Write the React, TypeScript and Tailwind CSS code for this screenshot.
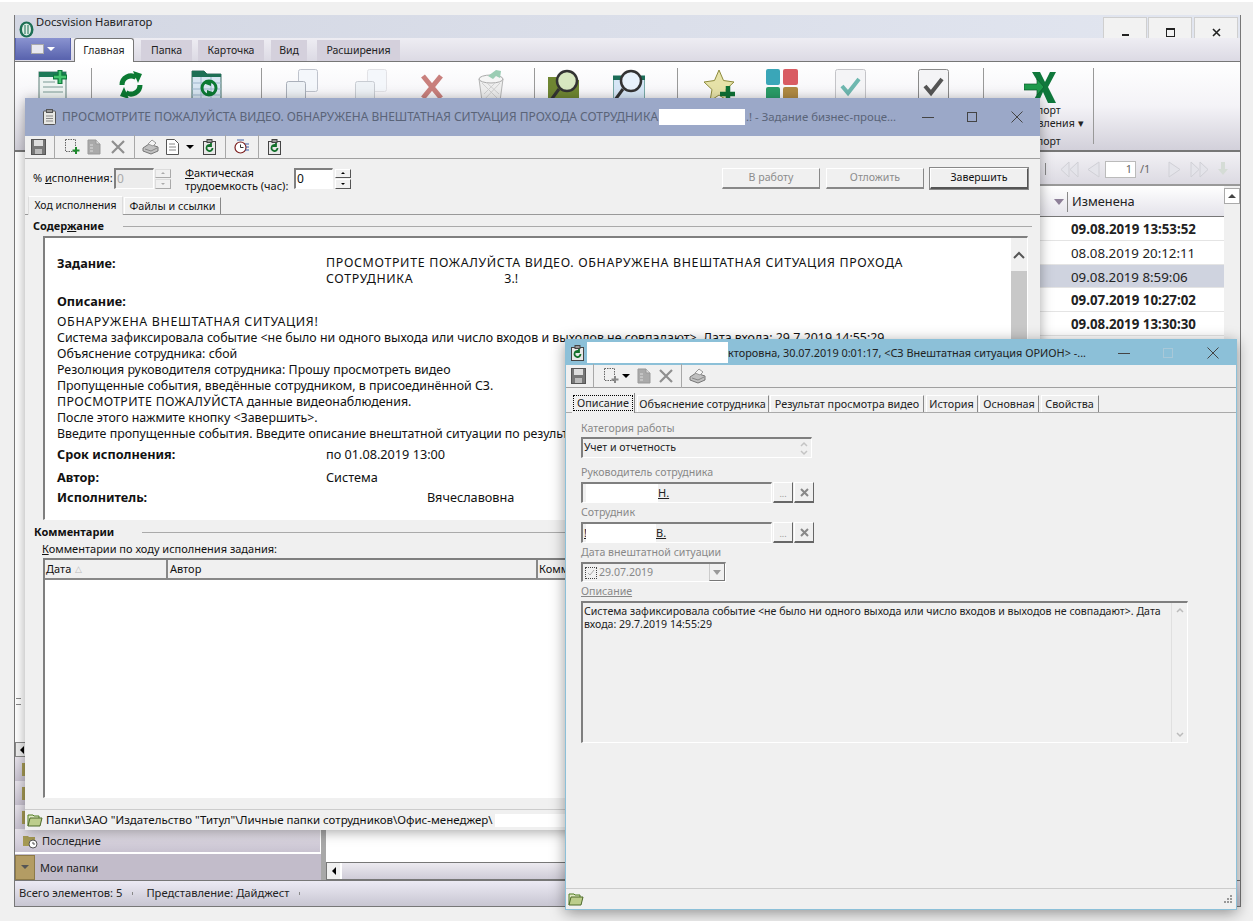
import type { ReactNode } from "react";

const Sep = ({ ml }: { ml: string }) => <div className={`w-px h-[24px] bg-[#a8a8a8] ${ml}`} />;

const Save = () => (
  <svg width="15" height="16" viewBox="0 0 15 16" className="shrink-0">
    <rect x="0.5" y="0.5" width="14" height="15" fill="#777" stroke="#555" />
    <rect x="3" y="1" width="9" height="6" fill="#ddd" />
    <rect x="4" y="10" width="7" height="5" fill="#bbb" />
  </svg>
);
const NewDoc = ({ grey }: { grey?: boolean }) => (
  <svg width="16" height="18" viewBox="0 0 16 18" className="shrink-0">
    <rect x="1.5" y="1.5" width="10" height="12" fill="none" stroke="#666" strokeDasharray="1.5 1" />
    <path d="M12 9v7M8.500 12.500h7" stroke={grey ? "#888" : "#1d8a2c"} strokeWidth="2" />
  </svg>
);
const Pages = () => (
  <svg width="14" height="16" viewBox="0 0 14 16" className="shrink-0">
    <path d="M1 1h8l4 4v10H1z" fill="#aaa" stroke="#999" />
    <path d="M9 1v4h4" fill="#ddd" stroke="#999" />
    <path d="M3 6h3M3 9h3M3 12h3" stroke="#ddd" />
  </svg>
);
const Cross = () => (
  <svg width="16" height="16" viewBox="0 0 16 16" className="shrink-0">
    <path d="M2 2l12 12M14 2L2 14" stroke="#8f8f8f" strokeWidth="2.200" />
  </svg>
);
const Printer = () => (
  <svg width="17" height="16" viewBox="0 0 17 16" className="shrink-0">
    <path d="M1 9l6-4 9 3v4l-7 3-8-3z" fill="#c0c0c0" stroke="#777" />
    <path d="M6 5l4-4 4 3-3 3z" fill="#f4f4f4" stroke="#999" />
    <path d="M3 10l6 2 6-3" fill="none" stroke="#888" />
  </svg>
);
const Sheet = () => (
  <svg width="13" height="16" viewBox="0 0 13 16" className="shrink-0">
    <path d="M0.500 0.500h8l4 4v11h-12z" fill="#fff" stroke="#555" />
    <path d="M3 5h6M3 8h7M3 11h7" stroke="#888" />
  </svg>
);
const Caret = () => <div className="w-0 h-0 border-x-[4px] border-x-transparent border-t-[4px] border-t-black" />;
const Revert = () => (
  <svg width="13" height="16" viewBox="0 0 13 16" className="shrink-0">
    <rect x="0.500" y="2.500" width="12" height="13" fill="#e8e8e8" stroke="#444" />
    <rect x="4" y="0.500" width="5" height="3" fill="#999" stroke="#444" />
    <path d="M9.500 9a3 3 0 1 1-2-2.800M8 4v3H5" fill="none" stroke="#12702a" strokeWidth="1.800" />
  </svg>
);
const Clock = () => (
  <svg width="16" height="16" viewBox="0 0 16 16" className="shrink-0">
    <circle cx="6.500" cy="8.500" r="5.500" fill="#fff" stroke="#7c1e1e" strokeWidth="1.200" />
    <path d="M6.500 5.500v3h3" fill="none" stroke="#333" />
    <path d="M3 1h7M11 5h4M12 8h3M11 11h4" stroke="#3b5fa8" />
  </svg>
);
const Folder = () => (
  <svg width="16" height="14" viewBox="0 0 16 14" className="shrink-0">
    <path d="M1 13V2h5l1 1h5v2" fill="#dfe8c4" stroke="#4e7a1e" />
    <path d="M1 13l2-8h12l-2 8z" fill="#bccd8c" stroke="#4e6a2a" />
  </svg>
);

const DocPlus = () => (
  <svg width="32" height="32" viewBox="0 0 32 32">
    <rect x="1" y="3" width="27" height="28" fill="#eef4f2" stroke="#5f7f78" />
    <rect x="1" y="3" width="27" height="5" fill="#1e7a58" />
    <path d="M5 13h12M5 18h20M5 23h20" stroke="#7b9a94" />
    <path d="M22 1v14M15 8h14" stroke="#0f7b3c" strokeWidth="5" />
    <path d="M22 2v12M16 8h12" stroke="#46c46f" strokeWidth="2.500" />
  </svg>
);
const Refresh = () => (
  <svg width="32" height="32" viewBox="0 0 32 32">
    <path d="M7 16a9 9 0 0 1 14-7.500" fill="none" stroke="#0c7a33" strokeWidth="5" />
    <path d="M25 16a9 9 0 0 1-14 7.500" fill="none" stroke="#0c7a33" strokeWidth="5" />
    <path d="M18 2l9 3-4 9zM14 30l-9-3 4-9z" fill="#0c7a33" />
  </svg>
);
const FolderGrid = () => (
  <svg width="32" height="32" viewBox="0 0 32 32">
    <path d="M1 31V2h12l3 3h14v26z" fill="#d8e6f2" stroke="#3f6d64" />
    <path d="M1 2h12l3 3h14v3H1z" fill="#1e6f55" />
    <path d="M1 14h29M1 20h29M1 26h29M10 8v23M20 8v23" stroke="#9db6cc" />
    <circle cx="18" cy="19" r="7" fill="none" stroke="#0c7a33" strokeWidth="3" />
    <path d="M12 14l8-3v6zM24 24l-8 3v-6z" fill="#0c7a33" />
  </svg>
);
const CopyBoxes = ({ faded }: { faded?: boolean }) => (
  <svg width="32" height="34" viewBox="0 0 32 34">
    <rect x="12.500" y="0.500" width="19" height="22" rx="2" fill="#f4f7fb" stroke={faded ? "#e2e2e6" : "#bfc3cc"} />
    <rect x="0.500" y="12.500" width="19" height="21" rx="2" fill="#eef2f6" stroke={faded ? "#c8ccd2" : "#aab0ba"} />
  </svg>
);
const RedX = () => (
  <svg width="32" height="32" viewBox="0 0 32 32">
    <path d="M7 5l18 22M25 5L7 27" stroke="#c9807d" strokeWidth="5" />
  </svg>
);
const Bin = () => (
  <svg width="32" height="34" viewBox="0 0 32 34">
    <path d="M4 10l3 22h18l3-22z" fill="#eeeeee" stroke="#b5b5b5" />
    <ellipse cx="16" cy="10" rx="12" ry="4" fill="#f5f5f5" stroke="#aaa" />
    <path d="M7 14l17 17M25 14L9 31M12 14l12 11M20 14L9 25" stroke="#cfcfcf" />
    <path d="M13 7l8-6 5 1-1 7-4-2-3 3z" fill="#9bcdb4" />
  </svg>
);
const FolderMag = () => (
  <svg width="32" height="34" viewBox="0 0 32 34">
    <path d="M0 8h12l2 3h17v23H0z" fill="#6f8632" />
    <circle cx="19" cy="12" r="10" fill="#d7e7c0" stroke="#333" strokeWidth="2.500" />
    <path d="M11 20L3 31" stroke="#333" strokeWidth="3" />
  </svg>
);
const SheetMag = () => (
  <svg width="32" height="34" viewBox="0 0 32 34">
    <rect x="0" y="7" width="32" height="27" fill="#d6e6f6" stroke="#1c6d58" />
    <rect x="0" y="7" width="32" height="4" fill="#1c6d58" />
    <circle cx="18" cy="12" r="10" fill="#e8f2fb" stroke="#333" strokeWidth="2.500" />
    <path d="M10 20L2 31" stroke="#333" strokeWidth="3" />
  </svg>
);
const StarPlus = () => (
  <svg width="32" height="34" viewBox="0 0 32 34">
    <path d="M16 1l4.500 10.500L31 13l-8 7.500L25 32l-9-6-9 6 2-11.500L1 13l10.500-1.500z" fill="#e6e2a8" stroke="#8d8a3c" />
    <path d="M25 17v16M17 25h15" stroke="#0d7034" strokeWidth="4.500" />
  </svg>
);
const Tiles = () => (
  <svg width="32" height="34" viewBox="0 0 32 34">
    <rect x="0" y="0" width="14" height="16" rx="2" fill="#3aa6b8" />
    <rect x="17" y="0" width="15" height="16" rx="2" fill="#d95b62" />
    <rect x="0" y="18" width="14" height="16" rx="2" fill="#2a9d68" />
    <rect x="17" y="18" width="15" height="16" rx="2" fill="#b08a43" />
  </svg>
);
const CheckBox = ({ color, edge }: { color: string; edge: string }) => (
  <svg width="32" height="34" viewBox="0 0 32 34">
    <rect x="0.500" y="0.500" width="30" height="33" rx="2" fill="#f4f4f6" stroke={edge} />
    <path d="M7 17l6 7 11-14" fill="none" stroke={color} strokeWidth="4" />
  </svg>
);
const Excel = () => (
  <svg width="32" height="32" viewBox="0 0 32 32">
    <path d="M8 1h8l5 10 5-10h6l-8 15 8 16h-8l-5-11-5 11H8l9-16z" fill="#10783c" />
    <path d="M0 13h13V8l7 8-7 8v-5H0z" fill="#1f9a4c" stroke="#0d5a2c" strokeWidth="0.700" />
  </svg>
);

// faded pager arrows of the grid toolbar
const PagerArrow = ({ d, ml }: { d: string; ml: string }) => (
  <svg width="20" height="17" viewBox="0 0 20 17" className={`shrink-0 ${ml}`}>
    <path d={d} fill="#e4e4ea" stroke="#d0d0d6" />
  </svg>
);

const Inset = ({ className, children }: { className: string; children?: ReactNode }) => (
  <div className={`border-t-2 border-l-2 border-t-[#7f7f7f] border-l-[#7f7f7f] border-r border-b border-r-white border-b-white ${className}`}>
    {children}
  </div>
);

const Spin = ({ faded, ml }: { faded?: boolean; ml: string }) => (
  <div className={`flex flex-col w-[16px] h-[20px] gap-px ${ml}`}>
    {[0, 1].map((i) => (
      <div
        key={i}
        className={`flex-1 flex items-center justify-center border ${
          faded ? "border-[#dcdcdc] border-b-[#aaa] border-r-[#aaa]" : "border-white border-b-[#555] border-r-[#555] bg-[#f0f0f0]"
        }`}
      >
        <div
          className={
            i === 0
              ? `w-0 h-0 border-x-[2px] border-x-transparent border-b-[2px] ${faded ? "border-b-[#aaa]" : "border-b-black"}`
              : `w-0 h-0 border-x-[2px] border-x-transparent border-t-[2px] ${faded ? "border-t-[#aaa]" : "border-t-black"}`
          }
        />
      </div>
    ))}
  </div>
);

const ActionBtn = ({ label, on, ml }: { label: string; on?: boolean; ml?: string }) => (
  <div
    className={`w-[98px] h-[21px] flex items-center justify-center text-[10.6px] border border-t-white border-l-white ${ml ?? ""} ${
      on ? "border-r-[#555] border-b-[#555] border-b-2 outline outline-[#888] text-[#111]" : "border-r-[#888] border-b-[#888] border-b-2 text-[#8c8c8c]"
    }`}
  >
    {label}
  </div>
);

const WinControls = ({ max }: { max: string }) => (
  <>
    <div className="w-[12px] h-px bg-[#444]" />
    <div className={`w-[10px] h-[10px] border ml-[33px] ${max}`} />
    <svg width="12" height="12" viewBox="0 0 12 12" className="ml-[34px]">
      <path d="M0.500 0.500l11 11M11.500 0.500l-11 11" stroke="#444" />
    </svg>
  </>
);

const rows = [
  { t: "09.08.2019 13:53:52", bold: true },
  { t: "08.08.2019 20:12:11" },
  { t: "09.08.2019 8:59:06", sel: true },
  { t: "09.07.2019 10:27:02", bold: true },
  { t: "09.08.2019 13:30:30", bold: true },
  { t: "" },
];

const MainWindow = () => (
  <div className="flex flex-col h-full border-x border-b border-[#777] bg-white font-['Noto_Sans',sans-serif] text-[#222]">
    <div className="h-[23px] flex items-center pl-[4px] bg-gradient-to-r from-[#d3d7e3] to-[#e2e6f0] relative shrink-0">
      <svg width="15" height="17" viewBox="0 0 15 17" className="mt-[5px]">
        <ellipse cx="7.500" cy="8.500" rx="7" ry="8" fill="#1d6f54" />
        <ellipse cx="7.500" cy="8.500" rx="4.500" ry="6" fill="#dfeee6" />
        <path d="M6 4v9M9 4v9" stroke="#1d6f54" />
      </svg>
      <span className="ml-[2px] text-[11.2px] mb-[9px]">Docsvision Навигатор</span>
      <div className="flex ml-auto mr-[2px] h-[23px] items-end">
        <div className="w-[44px] h-[21px] bg-[#f2f2f2] border-x border-t border-[#cfcfcf] flex items-end justify-center pb-[2px]">
          <div className="w-[7px] h-[2px] bg-[#222]" />
        </div>
        <div className="w-[44px] h-[21px] ml-[1px] bg-[#f2f2f2] border-x border-t border-[#cfcfcf] flex items-end justify-center pb-[1px]">
          <div className="w-[9px] h-[9px] border border-t-2 border-[#222]" />
        </div>
        <div className="w-[44px] h-[21px] ml-[2px] bg-[#f2f2f2] border-x border-t border-[#cfcfcf] flex items-end justify-center pb-[1px]">
          <svg width="9" height="9" viewBox="0 0 9 9"><path d="M1 1l7 7M8 1L1 8" stroke="#222" strokeWidth="1.600" /></svg>
        </div>
      </div>
    </div>
    <div className="h-[24px] flex items-end bg-gradient-to-b from-[#eeedf3] to-[#dcdae4] border-b border-[#777] shrink-0 text-[10.5px]">
      <div className="w-[56px] h-[23px] mb-[1px] bg-gradient-to-b from-[#8a93d0] to-[#5a64ae] border border-[#5a64b0] flex items-center justify-center gap-[3px]">
        <div className="w-[13px] h-[10px] bg-[#e8e8f0] border border-[#aaa]" />
        <div className="w-0 h-0 border-x-[4px] border-x-transparent border-t-[4px] border-t-white" />
      </div>
      <div className="w-[60px] h-[24px] ml-[3px] -mb-px bg-white border-x border-t border-[#777] rounded-t-[3px] flex items-center justify-center">Главная</div>
      <div className="w-[51px] h-[21px] ml-[7px] bg-[#d4d0dc] flex items-center justify-center">Папка</div>
      <div className="w-[66px] h-[21px] ml-[6px] bg-[#d4d0dc] flex items-center justify-center">Карточка</div>
      <div className="w-[36px] h-[21px] ml-[7px] bg-[#d4d0dc] flex items-center justify-center">Вид</div>
      <div className="w-[83px] h-[21px] ml-[10px] bg-[#d4d0dc] flex items-center justify-center">Расширения</div>
    </div>
    <div className="h-[90px] flex items-start pt-[6px] bg-gradient-to-b from-white via-[#f4f3f7] to-[#d2d0da] border-b-2 border-[#777] shrink-0">
      <div className="ml-[23px] mt-[1px]"><DocPlus /></div>
      <div className="ml-[21px] w-px h-[76px] bg-[#999]" />
      <div className="ml-[23px] mt-[1px]"><Refresh /></div>
      <div className="ml-[44px] mt-[1px]"><FolderGrid /></div>
      <div className="ml-[38px] w-px h-[76px] bg-[#999]" />
      <div className="ml-[24px] mt-[1px]"><CopyBoxes /></div>
      <div className="ml-[37px] mt-[1px]"><CopyBoxes faded /></div>
      <div className="ml-[29px] mt-[3px]"><RedX /></div>
      <div className="ml-[27px] mt-[1px]"><Bin /></div>
      <div className="ml-[27px] w-px h-[76px] bg-[#999]" />
      <div className="ml-[13px] mt-[1px]"><FolderMag /></div>
      <div className="ml-[33px] mt-[1px]"><SheetMag /></div>
      <div className="ml-[32px] w-px h-[76px] bg-[#999]" />
      <div className="ml-[25px] mt-[1px]"><StarPlus /></div>
      <div className="ml-[31px] mt-[1px]"><Tiles /></div>
      <div className="ml-[37px] mt-[1px]"><CheckBox color="#6fb8b0" edge="#c4c4c8" /></div>
      <div className="ml-[51px] mt-[1px]"><CheckBox color="#555" edge="#8a8a8a" /></div>
      <div className="ml-[33px] w-px h-[76px] bg-[#999]" />
      <div className="ml-[40px] mt-[3px] w-[32px] flex flex-col items-center whitespace-nowrap text-[10.6px] leading-[13px]">
        <Excel />
        <span className="mt-[1px]">Экспорт</span>
        <span>представления ▾</span>
        <span className="mt-[5px]">Экспорт</span>
      </div>
      <div className="ml-[37px] w-px h-[76px] bg-[#999]" />
    </div>
    <div className="flex-1 flex min-h-0">
      <div className="w-[311px] flex flex-col shrink-0 bg-white border-r-[5px] border-[#a8a8a8]">
        <div className="flex-1 relative">
          <div className="absolute left-[1px] top-[546px] w-[5px] h-[7px] border-y border-[#888]" />
        </div>
        <div className="h-[15px] bg-[#ddd] border border-[#888]">
          <div className="w-[12px] h-full bg-[#eee] border-r border-[#888] flex items-center justify-center">
            <div className="w-0 h-0 border-y-[4px] border-y-transparent border-r-[4px] border-r-black" />
          </div>
        </div>
        {[0, 1, 2].map((i) => (
          <div key={i} className="h-[24px] bg-gradient-to-b from-[#e8e4ec] to-[#c8c2d0] flex items-center pl-[7px]">
            <div className="w-[12px] h-[13px] bg-[#a69a54]" />
          </div>
        ))}
        <div className="h-[24px] bg-gradient-to-b from-[#e8e4ec] to-[#c8c2d0] border-b border-r border-white flex items-center pl-[7px] text-[11px]">
          <svg width="16" height="16" viewBox="0 0 16 16">
            <path d="M1 13V3h5l1 1h6v9z" fill="#a69a54" />
            <circle cx="11" cy="11" r="4" fill="#fff" stroke="#555" />
            <path d="M11 9v2h2" fill="none" stroke="#555" />
          </svg>
          <span className="ml-[4px] pt-[2px]">Последние</span>
        </div>
        <div className="h-[26px] mt-px bg-[#c2bcca] flex items-center text-[11px]">
          <div className="w-[20px] h-[25px] bg-[#b39c64] border border-[#8d7a48] flex items-center justify-center">
            <div className="w-0 h-0 border-x-[4px] border-x-transparent border-t-[4px] border-t-[#555]" />
          </div>
          <span className="ml-[5px] pt-[2px]">Мои папки</span>
        </div>
      </div>
      <div className="flex-1 flex flex-col min-w-0">
        <div className="h-[34px] bg-gradient-to-b from-[#f2f1f5] to-[#dcdae2] border-b-2 border-[#999] flex items-center justify-end pt-[2px] shrink-0">
          <div className="w-px h-[12px] bg-[#888] mr-[14px]" />
          <PagerArrow d="M9 1L1 8.500 9 16zM18 1L10 8.500 18 16z" ml="mr-[2px]" />
          <PagerArrow d="M17 1L6 8.500 17 16z" ml="mr-[3px]" />
          <div className="w-[31px] h-[17px] bg-white border border-[#bbb] flex items-center justify-end pr-[3px] text-[11px] text-[#666]">1</div>
          <span className="text-[11px] text-[#666] ml-[4px] w-[26px]">/1</span>
          <PagerArrow d="M3 1L14 8.500 3 16z" ml="mr-[3px]" />
          <PagerArrow d="M2 1L10 8.500 2 16zM11 1L19 8.500 11 16z" ml="mr-[8px]" />
          <svg width="12" height="14" viewBox="0 0 12 14" className="mr-[11px]"><path d="M4 0h4v7h3l-5 6-5-6h3z" fill="#d5dcd6" /></svg>
        </div>
        <div className="flex-1 flex min-h-0 bg-white">
          <div className="flex-1 flex flex-col">
            <div className="h-[31px] flex items-center justify-end bg-gradient-to-b from-white to-[#e4e3ea] border-b border-[#777] pt-[2px] shrink-0">
              <div className="w-0 h-0 border-x-[5px] border-x-transparent border-t-[6px] border-t-[#8d7f98] mr-[3px]" />
              <div className="w-px h-[20px] bg-[#888]" />
              <span className="w-[156px] pl-[4px] text-[12.8px]">Изменена</span>
            </div>
            {rows.map((r, i) => (
              <div key={i} className={`${r.sel ? "h-[23px] bg-[#cfd3df]" : "h-[24px]"} flex items-center justify-end border-b border-[#e4e4e4] pt-[3px] shrink-0`}>
                <span className={`w-[157px] pl-[4px] text-[13.300px] ${r.bold ? "font-bold" : ""}`}>{r.t}</span>
              </div>
            ))}
            <div className="flex-1" />
            <div className="h-[18px] bg-gradient-to-b from-[#eceaf0] to-[#cfccd8] border border-[#777] flex shrink-0">
              <div className="w-[15px] bg-[#f0f0f0] border-r-2 border-white flex items-center justify-center">
                <div className="w-0 h-0 border-y-[4px] border-y-transparent border-r-[4px] border-r-black" />
              </div>
            </div>
          </div>
          <div className="w-[16px] flex flex-col bg-[#f0f0f0] shrink-0">
            <div className="h-[16px] mt-[2px] border border-[#aaa] bg-white flex items-center justify-center">
              <div className="w-0 h-0 border-x-[4px] border-x-transparent border-b-[4px] border-b-[#444]" />
            </div>
          </div>
        </div>
      </div>
    </div>
    <div className="h-[26px] flex items-center pl-[4px] bg-gradient-to-b from-[#eceaf4] to-[#c8c6d2] border-t border-[#777] text-[11.2px] shrink-0">
      <span>Всего элементов: 5</span>
      <div className="w-px h-[3px] bg-[#888] ml-[10px]" />
      <span className="ml-[13px]">Представление: Дайджест</span>
      <div className="w-px h-[3px] bg-[#888] ml-[10px]" />
    </div>
  </div>
);

const TaskWindow = () => (
  <div className="absolute left-[25px] top-[98px] w-[1015px] h-[732px] flex flex-col bg-[#f0f0f0] shadow-[0_2px_12px_rgba(0,0,0,0.35)] font-['Liberation_Sans',sans-serif] text-[#111]">
    <div className="h-[38px] bg-[#9ba8c8] flex items-center pl-[18px] pr-[17px] shrink-0 font-['Noto_Sans',sans-serif] text-[#5a6478] text-[12px] whitespace-nowrap">
      <svg width="13" height="16" viewBox="0 0 13 16" className="shrink-0">
        <rect x="0.500" y="2" width="12" height="13.500" rx="1" fill="#e8e8e4" stroke="#555" />
        <rect x="3.500" y="0.500" width="6" height="3" fill="#999" stroke="#555" />
        <path d="M3 7h7M3 9.500h7M3 12h7" stroke="#888" />
      </svg>
      <span className="w-[597px] ml-[6px] overflow-hidden">ПРОСМОТРИТЕ ПОЖАЛУЙСТА ВИДЕО. ОБНАРУЖЕНА ВНЕШТАТНАЯ СИТУАЦИЯ ПРОХОДА СОТРУДНИКА</span>
      <div className="w-[86px] h-[16px] bg-white" />
      <span className="ml-px text-[11.400px]">.! - Задание бизнес-проце...</span>
      <div className="ml-auto flex items-center">
        <WinControls max="border-[#444]" />
      </div>
    </div>
    <div className="h-[23px] flex items-center pl-[6px] border-b border-[#a0a0a0] shrink-0">
      <Save />
      <Sep ml="ml-[8px]" />
      <div className="ml-[9px]"><NewDoc /></div>
      <div className="ml-[7px]"><Pages /></div>
      <div className="ml-[9px]"><Cross /></div>
      <Sep ml="ml-[8px]" />
      <div className="ml-[7px]"><Printer /></div>
      <div className="ml-[7px]"><Sheet /></div>
      <div className="ml-[7px]"><Caret /></div>
      <div className="ml-[9px]"><Revert /></div>
      <Sep ml="ml-[9px]" />
      <div className="ml-[8px]"><Clock /></div>
      <Sep ml="ml-[8px]" />
      <div className="ml-[9px]"><Revert /></div>
    </div>
    <div className="h-[37px] flex items-center pl-[8px] pt-[2px] shrink-0 text-[11px]">
      <span className="w-[81px] whitespace-nowrap">% <u>и</u>сполнения:</span>
      <Inset className="w-[40px] h-[21px] bg-[#ececec] text-[#aaa] pl-[1px] text-[12px]">0</Inset>
      <Spin faded ml="ml-px" />
      <div className="ml-[14px] w-[109px] leading-[13px]">
        <u>Ф</u>актическая
        <br />
        трудоемкость (час):
      </div>
      <Inset className="w-[39px] h-[21px] bg-white pl-[1px] text-[12px]">0</Inset>
      <Spin ml="ml-[2px]" />
      <ActionBtn label="В работу" ml="ml-[371px]" />
      <ActionBtn label="Отложить" ml="ml-[6px]" />
      <ActionBtn label="Завершить" on ml="ml-[6px]" />
    </div>
    <div className="h-[19px] flex items-end pl-[3px] border-b border-[#999] shrink-0 text-[10.8px]">
      <div className="w-[95px] h-[19px] -mb-px bg-[#f0f0f0] border-t border-x border-t-white border-x-[#ddd] flex items-center justify-center pb-[1px] text-[10.4px]">Ход исполнения</div>
      <div className="w-[97px] h-[17px] ml-px border-t border-x border-t-white border-l-white border-r-[#888] flex items-center justify-center">Файлы и ссылки</div>
    </div>
    <div className="h-[21px] flex items-center pl-[8px] pr-[8px] pt-[2px] shrink-0">
      <span className="text-[11px] font-bold w-[90px] whitespace-nowrap">Содер<u>ж</u>ание</span>
      <div className="flex-1 h-px bg-[#aaa]" />
    </div>
    <Inset className="ml-[18px] mr-[12px] h-[284px] bg-white flex shrink-0">
      <div className="flex-1 min-w-0 pl-[12px] text-[12.700px] leading-[16px] whitespace-nowrap overflow-hidden">
        <div className="grid grid-cols-[269px_1fr] mt-[17px]">
          <b>Задание:</b>
          <div className="text-[12.400px] tracking-[0.67px]">
            ПРОСМОТРИТЕ ПОЖАЛУЙСТА ВИДЕО. ОБНАРУЖЕНА ВНЕШТАТНАЯ СИТУАЦИЯ ПРОХОДА
            <br />
            СОТРУДНИКА<span className="ml-[91px] tracking-normal">3.!</span>
          </div>
        </div>
        <div className="font-bold mt-[6px]">Описание:</div>
        <div className="mt-[5px] text-[12.400px]">
          <span className="tracking-[0.67px]">ОБНАРУЖЕНА ВНЕШТАТНАЯ СИТУАЦИЯ!</span>
          <br />
          Система зафиксировала событие &lt;не было ни одного выхода или число входов и выходов не совпадают&gt;. Дата входа: 29.7.2019 14:55:29
          <br />
          Объяснение сотрудника: сбой
          <br />
          Резолюция руководителя сотрудника: Прошу просмотреть видео
          <br />
          Пропущенные события, введённые сотрудником, в присоединённой СЗ.
          <br />
          <span className="tracking-[0.3px]">ПРОСМОТРИТЕ ПОЖАЛУЙСТА</span> данные видеонаблюдения.
          <br />
          После этого нажмите кнопку &lt;Завершить&gt;.
          <br />
          Введите пропущенные события. Введите описание внештатной ситуации по результатам просмотра.
        </div>
        <div className="grid grid-cols-[269px_1fr] mt-[4px]">
          <b>Срок исполнения:</b>
          <span>по 01.08.2019 13:00</span>
        </div>
        <div className="grid grid-cols-[269px_1fr] mt-[7px]">
          <b>Автор:</b>
          <span>Система</span>
        </div>
        <div className="grid grid-cols-[269px_1fr] mt-[4px]">
          <b>Исполнитель:</b>
          <span className="pl-[101px]">Вячеславовна</span>
        </div>
      </div>
      <div className="w-[16px] bg-[#f0f0f0] flex flex-col shrink-0">
        <div className="h-[33px] flex items-center justify-center">
          <svg width="12" height="8" viewBox="0 0 12 8"><path d="M1 7l5-5 5 5" fill="none" stroke="#555" strokeWidth="2" /></svg>
        </div>
        <div className="flex-1 bg-[#c8c8c8]" />
      </div>
    </Inset>
    <div className="h-[22px] flex items-center pl-[9px] pr-[8px] pt-[2px] shrink-0">
      <span className="text-[11px] font-bold w-[108px]">Комментарии</span>
      <div className="flex-1 h-px bg-[#aaa]" />
    </div>
    <div className="pl-[17px] text-[11px] leading-[13px] shrink-0">
      <u>К</u>омментарии по ходу исполнения задания:
    </div>
    <Inset className="ml-[18px] mr-[12px] mt-[3px] flex-1 bg-white flex flex-col min-h-0">
      <div className="h-[20px] flex items-center bg-[#f0f0f0] border-b-2 border-[#888] text-[11px] shrink-0">
        <div className="w-[123px] pl-[1px] border-r-2 border-[#888] h-full flex items-center">
          Дата <span className="text-[#bbb] ml-[4px] text-[9px]">△</span>
        </div>
        <div className="w-[370px] pl-[2px] border-r-2 border-[#888] h-full flex items-center">Автор</div>
        <div className="pl-[1px]">Комментарий</div>
      </div>
    </Inset>
    <div className="h-[12px] border-b border-[#ccc] shrink-0" />
    <div className="h-[20px] flex items-center pl-[2px] shrink-0 font-['Noto_Sans',sans-serif] text-[11.5px]">
      <Folder />
      <span className="ml-[3px] w-[449px] whitespace-nowrap">Папки\ЗАО "Издательство "Титул"\Личные папки сотрудников\Офис-менеджер\</span>
      <div className="flex-1 h-[13px] bg-white" />
    </div>
  </div>
);

const Label = ({ children, mt }: { children: ReactNode; mt: string }) => (
  <div className={`text-[10.600px] leading-[13px] text-[#888] ${mt}`}>{children}</div>
);

const PickField = ({ pre, tail, w }: { pre?: string; tail: string; w: string }) => (
  <div className="flex h-[21px] mt-[3px]">
    <Inset className="w-[191px] h-[21px] flex items-center text-[11px] text-[#222]">
      <span className="ml-[1px] w-[2px] underline">{pre}</span>
      <div className={`h-[19px] bg-white ${w}`} />
      <span className="underline">{tail}</span>
    </Inset>
    <div className="w-[20px] ml-px border border-t-white border-l-white border-r-[#666] border-b-2 border-b-[#666] flex items-end justify-center text-[9px] text-[#999] leading-[14px]">...</div>
    <div className="w-[20px] ml-px border border-t-white border-l-white border-r-[#666] border-b-2 border-b-[#666] flex items-center justify-center">
      <svg width="9" height="9" viewBox="0 0 9 9"><path d="M1 1l7 7M8 1L1 8" stroke="#888" strokeWidth="2" /></svg>
    </div>
  </div>
);

const tabs = [
  { t: "Объяснение сотрудника", w: "w-[132px]" },
  { t: "Результат просмотра видео", w: "w-[154px]" },
  { t: "История", w: "w-[52px]" },
  { t: "Основная", w: "w-[60px]" },
  { t: "Свойства", w: "w-[58px]" },
];

const CardWindow = () => (
  <div className="absolute left-[565px] top-[339px] w-[672px] h-[571px] flex flex-col bg-[#f0f0f0] border border-[#8cc0d8] border-t-0 shadow-[0_3px_14px_rgba(0,0,0,0.4)] font-['Liberation_Sans',sans-serif] text-[#111]">
    <div className="h-[26px] bg-[#8cc0d8] flex items-center pl-[5px] pr-[17px] pt-[2px] shrink-0 font-['Noto_Sans',sans-serif] text-[10.9px] text-[#222] whitespace-nowrap">
      <Revert />
      <div className="w-[141px] h-[21px] bg-white ml-[3px] -mt-[2px]" />
      <span className="w-[372px]">кторовна, 30.07.2019 0:01:17, &lt;СЗ Внештатная ситуация ОРИОН&gt; -...</span>
      <div className="ml-auto flex items-center">
        <WinControls max="border-[#a8c8d8]" />
      </div>
    </div>
    <div className="h-[23px] flex items-center pl-[5px] border-b border-[#a0a0a0] shrink-0">
      <Save />
      <Sep ml="ml-[7px]" />
      <div className="ml-[9px]"><NewDoc grey /></div>
      <div className="ml-[3px]"><Caret /></div>
      <div className="ml-[7px]"><Pages /></div>
      <div className="ml-[7px]"><Cross /></div>
      <Sep ml="ml-[7px]" />
      <div className="ml-[7px]"><Printer /></div>
    </div>
    <div className="h-[25px] flex items-end pl-[6px] border-b border-[#aaa] shrink-0 text-[10.8px] text-[#222]">
      <div className="w-[63px] h-[20px] border-r border-[#888] -mb-px bg-[#f0f0f0] flex items-center justify-center">
        <span className="outline-dotted outline-1 outline-black px-[3px] leading-[14px]">Описание</span>
      </div>
      {tabs.map((x) => (
        <div key={x.t} className={`${x.w} h-[17px] ml-[1.5px] pt-[1px] border-t border-l border-r border-t-white border-l-white border-r-[#888] flex items-center justify-center whitespace-nowrap`}>
          {x.t}
        </div>
      ))}
    </div>
    <div className="flex-1 min-h-0 pl-[15px] pt-[9px]">
      <Label mt="mt-0">Категория работы</Label>
      <Inset className="w-[231px] h-[21px] mt-[2px] flex items-center justify-between pl-[1px] pr-[3px] text-[10.6px] text-[#222]">
        Учет и отчетность
        <svg width="8" height="15" viewBox="0 0 8 15"><path d="M1 5l3-3 3 3M1 10l3 3 3-3" fill="none" stroke="#c4c4c4" strokeWidth="1.500" /></svg>
      </Inset>
      <Label mt="mt-[8px]">Руководитель сотрудника</Label>
      <PickField tail="Н." w="w-[72px]" />
      <Label mt="mt-[3px]">Сотрудник</Label>
      <PickField pre="!" tail="В." w="w-[70px]" />
      <Label mt="mt-[3px]">Дата внештатной ситуации</Label>
      <Inset className="w-[145px] h-[20px] mt-[3px] flex items-center pl-[2px] text-[10.6px] text-[#888]">
        <div className="w-[12px] h-[12px] border border-dotted border-[#444] flex items-center justify-center">
          <svg width="8" height="8" viewBox="0 0 8 8"><path d="M1 4l2 2 4-5" fill="none" stroke="#aaa" /></svg>
        </div>
        <span className="ml-[2px]">29.07.2019</span>
        <div className="ml-auto w-[16px] h-full border-l border-[#ccc] border-r border-r-[#777] border-b border-b-[#777] flex items-center justify-center">
          <div className="w-0 h-0 border-x-[4px] border-x-transparent border-t-[5px] border-t-[#999]" />
        </div>
      </Inset>
      <div className="text-[10.600px] leading-[13px] text-[#888] underline mt-[3px]">Описание</div>
      <Inset className="w-[607px] h-[142px] mt-[3px] flex text-[10.600px] leading-[13px] text-[#222]">
        <div className="flex-1 pt-[2px] pl-[1px] whitespace-nowrap">
          Система зафиксировала событие &lt;не было ни одного выхода или число входов и выходов не совпадают&gt;. Дата
          <br />
          входа: 29.7.2019 14:55:29
        </div>
        <div className="w-[16px] border-l border-[#e0e0e0] flex flex-col items-center justify-between py-[4px]">
          <svg width="8" height="6" viewBox="0 0 8 6"><path d="M1 5l3-3 3 3" fill="none" stroke="#bbb" strokeWidth="1.500" /></svg>
          <svg width="8" height="6" viewBox="0 0 8 6"><path d="M1 1l3 3 3-3" fill="none" stroke="#bbb" strokeWidth="1.500" /></svg>
        </div>
      </Inset>
    </div>
    <div className="h-[21px] border-t border-[#ccc] flex items-center justify-between pl-[2px] pr-[3px] shrink-0">
      <Folder />
      <svg width="9" height="9" viewBox="0 0 9 9" fill="#999">
        <rect x="6" y="0" width="2" height="2" />
        <rect x="6" y="3" width="2" height="2" />
        <rect x="3" y="3" width="2" height="2" />
        <rect x="6" y="6" width="2" height="2" />
        <rect x="3" y="6" width="2" height="2" />
        <rect x="0" y="6" width="2" height="2" />
      </svg>
    </div>
  </div>
);

const App = () => (
  <div className="relative w-[1253px] h-[921px] overflow-hidden bg-[#f0f0f0] flex flex-col">
    <div className="h-[2px] bg-white shrink-0" />
    <div className="flex-1 min-h-0 pt-[13px] pl-[14px] pr-[12px] pb-[14px]">
      <MainWindow />
    </div>
    <TaskWindow />
    <CardWindow />
  </div>
);

export default App;
